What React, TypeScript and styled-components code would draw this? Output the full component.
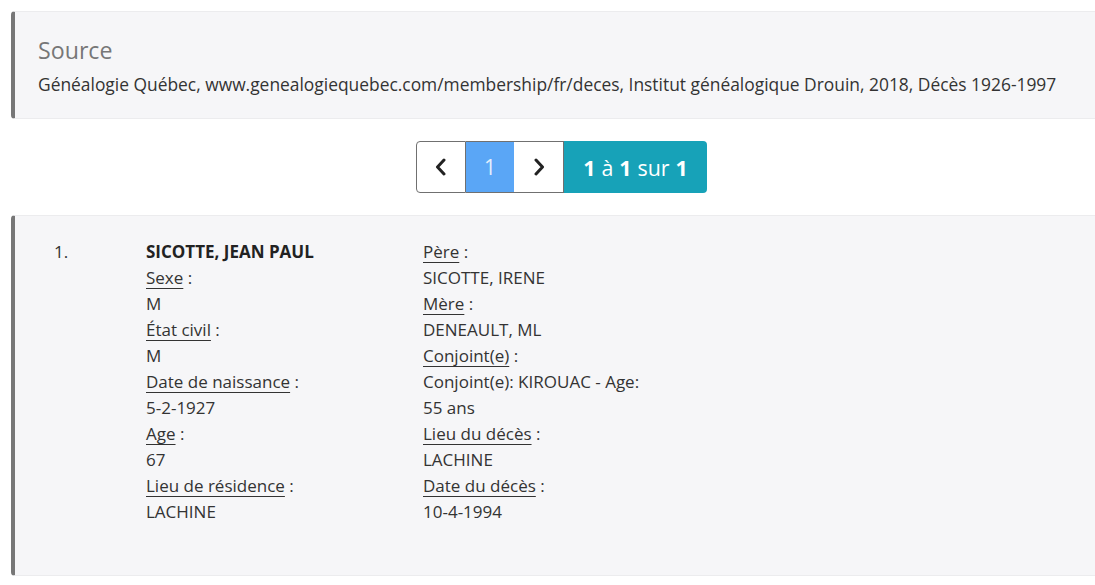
import React from 'react';
import styled, { createGlobalStyle } from 'styled-components';

const GlobalStyle = createGlobalStyle`
  html, body {
    margin: 0;
    padding: 0;
    background: #fff;
    overflow: hidden;
  }
  body {
    font-family: "Open Sans", "Liberation Sans", sans-serif;
    color: #333;
  }
`;

const Page = styled.div`
  width: 1101px;
  padding: 11px 0 0 11px;
`;

const Panel = styled.section`
  background: #f6f6f8;
  border-left: 4px solid #777;
  border-top: 1px solid #ececee;
  border-bottom: 1px solid #ececee;
  border-radius: 4px 0 0 4px;
  box-sizing: border-box;
`;

const SourcePanel = styled(Panel)`
  height: 108px;
  padding: 24px 0 0 23px;
`;

const SourceTitle = styled.h3`
  margin: 0 0 8px;
  font-size: 23.2px;
  font-weight: 400;
  line-height: 28px;
  color: #777;
`;

const SourceText = styled.p`
  margin: 0;
  font-size: 17.4px;
  line-height: 24px;
  color: #333;
  white-space: nowrap;
`;

const PagerRow = styled.nav`
  display: flex;
  justify-content: center;
  padding: 22px 0 22px;
`;

const Pager = styled.div`
  display: flex;
  height: 52px;
`;

const PageButton = styled.button<{ $first?: boolean }>`
  width: 50px;
  height: 52px;
  padding: 0;
  display: flex;
  align-items: center;
  justify-content: center;
  background: #fff;
  border: 1px solid #707070;
  border-left-width: ${p => (p.$first ? '1px' : '0')};
  border-radius: ${p => (p.$first ? '4px 0 0 4px' : '0')};
  color: #222;
  cursor: pointer;
`;

const ActivePage = styled.span`
  width: 48px;
  height: 52px;
  box-sizing: border-box;
  border-top: 1px solid #707070;
  border-bottom: 1px solid #707070;
  display: flex;
  align-items: center;
  justify-content: center;
  background: #5aa6f6;
  color: #e3eefc;
  font-size: 21px;
`;

const PageInfo = styled.span`
  width: 143px;
  height: 52px;
  display: flex;
  align-items: center;
  justify-content: center;
  gap: 6px;
  background: #17a2b8;
  color: #fff;
  font-size: 21.4px;
  border-radius: 0 4px 4px 0;
  b {
    font-weight: 700;
  }
`;

const RecordPanel = styled(Panel)`
  height: 361px;
  padding: 23px 0 0 39px;
`;

const RecordGrid = styled.div`
  display: grid;
  grid-template-columns: 92px 277px 1fr;
  font-size: 17px;
  line-height: 26px;
  color: #333;
`;

const Column = styled.div`
  display: flex;
  flex-direction: column;
`;

const Name = styled.strong`
  font-weight: 700;
  color: #222;
`;

const Label = styled.span`
  u {
    text-decoration: underline;
    text-decoration-thickness: 1px;
    text-underline-offset: 4px;
  }
`;

const Chevron = ({ dir }: { dir: 'left' | 'right' }) => (
  <svg width="14" height="18" viewBox="0 0 14 18" fill="none">
    <path
      d={dir === 'left' ? 'M10 2 L3.5 9 L10 16' : 'M4 2 L10.5 9 L4 16'}
      stroke="#222"
      strokeWidth="3"
      strokeLinecap="round"
      strokeLinejoin="round"
    />
  </svg>
);

const Field = ({ label, value }: { label: string; value: string }) => (
  <>
    <Label>
      <u>{label}</u> :
    </Label>
    <span>{value}</span>
  </>
);

export default function App() {
  return (
    <Page>
      <GlobalStyle />
      <SourcePanel>
        <SourceTitle>Source</SourceTitle>
        <SourceText>
          Généalogie Québec, www.genealogiequebec.com/membership/fr/deces, Institut généalogique Drouin, 2018, Décès 1926-1997
        </SourceText>
      </SourcePanel>

      <PagerRow>
        <Pager>
          <PageButton $first aria-label="Précédent">
            <Chevron dir="left" />
          </PageButton>
          <ActivePage>1</ActivePage>
          <PageButton aria-label="Suivant">
            <Chevron dir="right" />
          </PageButton>
          <PageInfo>
            <b>1</b> à <b>1</b> sur <b>1</b>
          </PageInfo>
        </Pager>
      </PagerRow>

      <RecordPanel>
        <RecordGrid>
          <Column>
            <span>1.</span>
          </Column>
          <Column>
            <Name>SICOTTE, JEAN PAUL</Name>
            <Field label="Sexe" value="M" />
            <Field label="État civil" value="M" />
            <Field label="Date de naissance" value="5-2-1927" />
            <Field label="Age" value="67" />
            <Field label="Lieu de résidence" value="LACHINE" />
          </Column>
          <Column>
            <Field label="Père" value="SICOTTE, IRENE" />
            <Field label="Mère" value="DENEAULT, ML" />
            <Label>
              <u>Conjoint(e)</u> :
            </Label>
            <span>Conjoint(e): KIROUAC - Age:</span>
            <span>55 ans</span>
            <Field label="Lieu du décès" value="LACHINE" />
            <Field label="Date du décès" value="10-4-1994" />
          </Column>
        </RecordGrid>
      </RecordPanel>
    </Page>
  );
}
